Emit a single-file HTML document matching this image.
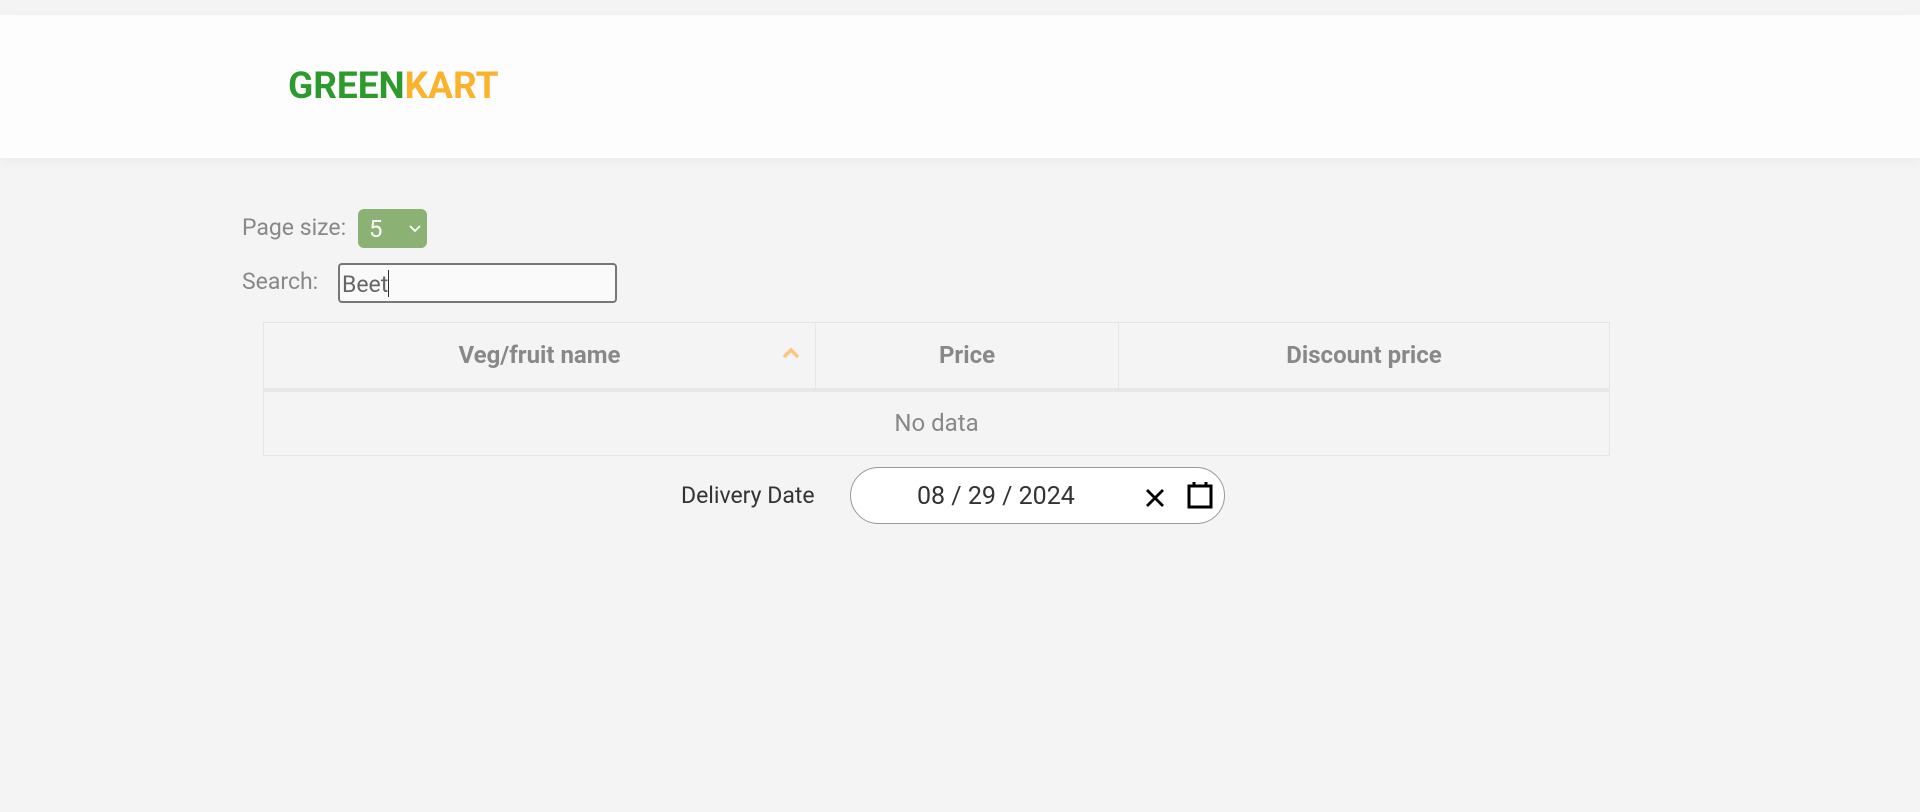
<!DOCTYPE html>
<html><head><meta charset="utf-8"><style>
*{box-sizing:border-box;margin:0;padding:0}
body{width:1920px;height:812px;background:#f4f4f4;font-family:Roboto,"Liberation Sans",sans-serif;position:relative;overflow:hidden}
.hdr{position:absolute;left:0;top:15px;width:1920px;height:143px;background:#fdfdfd;box-shadow:0 4px 12px rgba(0,0,0,.04)}
.logo{position:absolute;left:288px;top:65px;font-weight:bold;font-size:37px;letter-spacing:0;line-height:44px}
.t{position:absolute;color:#888;font-size:23px;line-height:26px}
.sel{position:absolute;left:358px;top:209px;width:69px;height:39px;background:#8bb174;border-radius:6px;color:#fff;font-size:24px;padding:6px 0 0 11px}
.inp{position:absolute;left:338px;top:263px;width:279px;height:40px;border:2px solid #777;border-radius:4px;background:#fafafa;font-size:23px;color:#666;padding:5px 0 0 2px}
table{position:absolute;left:263px;top:322px;width:1347px;height:134px;border-collapse:collapse}
th,td{border:1px solid #e6e6e6;color:#888;font-size:24px}
th{height:67px;font-weight:bold;border-bottom:4px solid #e6e6e6}
td{text-align:center;font-size:24px}
.dp{position:absolute;left:850px;top:467px;width:375px;height:57px;border:1px solid #999;border-radius:29px;background:#fff}
</style></head><body>
<div class="hdr"></div>
<div class="logo"><span style="color:#2d9a2e">GREEN</span><span style="color:#fbb32d">KART</span></div>
<div class="t" style="left:242px;top:215px">Page size:</div>
<div class="sel">5<svg style="position:absolute;left:51px;top:16px" width="12" height="8" viewBox="0 0 12 8"><path d="M1 1l5 5 5-5" stroke="#fff" stroke-width="1.8" fill="none"/></svg></div>
<div class="t" style="left:242px;top:269px">Search:</div>
<div class="inp">Beet<span style="display:inline-block;width:1px;height:27px;background:#333;vertical-align:-5px"></span></div>
<table><tr><th style="width:552px;position:relative">Veg/fruit name<svg style="position:absolute;left:518px;top:24px" width="18" height="12" viewBox="0 0 18 12"><path d="M2 10l7-7 7 7" stroke="#fdc57f" stroke-width="3.5" fill="none"/></svg></th><th style="width:303px">Price</th><th>Discount price</th></tr>
<tr><td colspan="3">No data</td></tr></table>
<div class="t" style="left:681px;top:483px;color:#333">Delivery Date</div>
<div class="dp"><div style="position:absolute;left:66px;top:14px;font-size:25px;color:#333">08 / 29 / 2024</div>
<svg style="position:absolute;left:294px;top:21px" width="20" height="18" viewBox="0 0 20 18"><path d="M2 1l16 16M18 1L2 17" stroke="#000" stroke-width="2.8"/></svg>
<svg style="position:absolute;left:336px;top:13px" width="27" height="28" viewBox="0 0 27 28"><rect x="2" y="5" width="22" height="21" fill="none" stroke="#000" stroke-width="3"/><path d="M7 1v5M19 1v5" stroke="#000" stroke-width="3"/></svg></div>
</body></html>
